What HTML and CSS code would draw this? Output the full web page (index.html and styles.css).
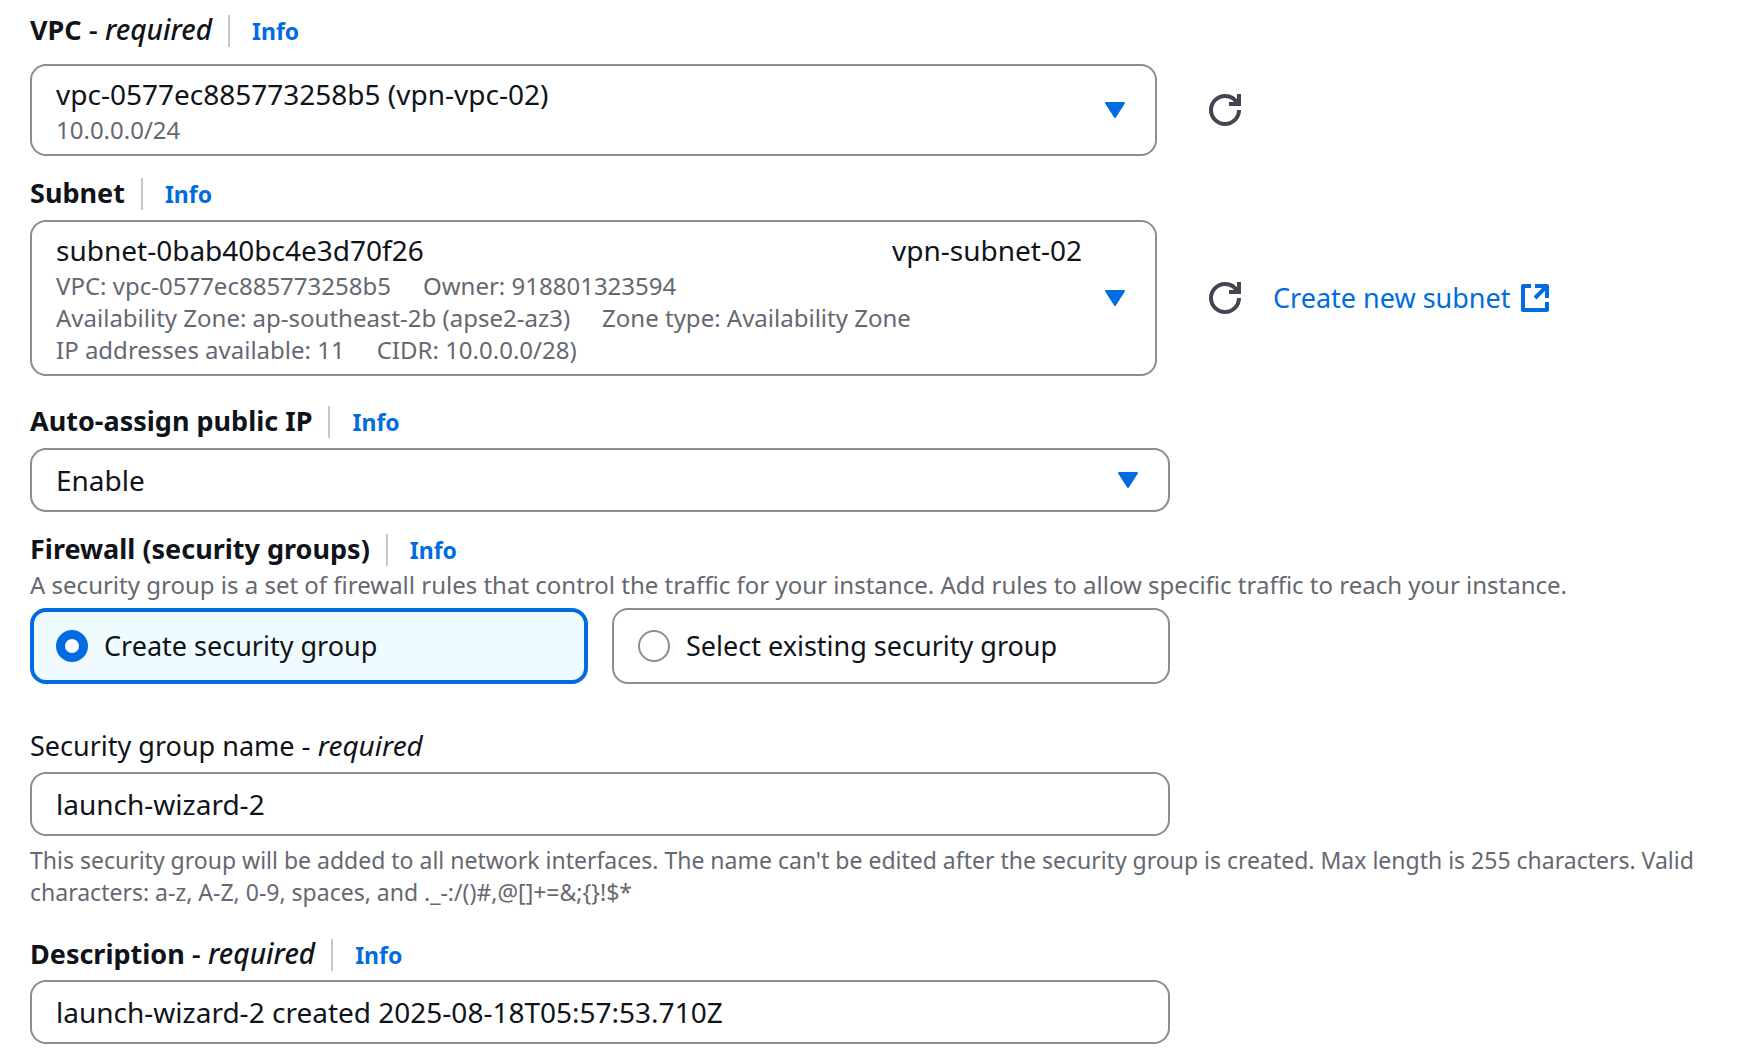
FILE: index.html
```html
<!DOCTYPE html>
<html lang="en">
<head>
<meta charset="utf-8">
<meta name="viewport" content="width=device-width, initial-scale=1">
<title>Network settings</title>
<link rel="stylesheet" href="styles.css">
</head>
<body>
<form class="settings">

  <section class="field field-spaced">
    <div class="label-row">
      <span class="label" id="vpc-label">VPC <span class="required">- <em>required</em></span></span>
      <a class="info" href="#vpc-info">Info</a>
    </div>
    <div class="control-row">
      <button type="button" class="picker" aria-haspopup="listbox" aria-labelledby="vpc-label vpc-value">
        <span class="picker-body" id="vpc-value">
          <span class="picker-title"><span>vpc-0577ec885773258b5 (vpn-vpc-02)</span></span>
          <span class="picker-meta"><span>10.0.0.0/24</span></span>
        </span>
        <svg class="caret" viewBox="0 0 20 16" aria-hidden="true"><path d="M1 1h18L10 15z"/></svg>
      </button>
      <button type="button" class="refresh" aria-label="Refresh VPCs">
        <svg viewBox="0 0 16 16" aria-hidden="true"><path d="M15 8c0 3.87-3.13 7-7 7s-7-3.13-7-7 3.13-7 7-7c2.79 0 5.2 1.63 6.33 4M10 5h5V0"/></svg>
      </button>
    </div>
  </section>

  <section class="field">
    <div class="label-row">
      <span class="label" id="subnet-label">Subnet</span>
      <a class="info" href="#subnet-info">Info</a>
    </div>
    <div class="control-row">
      <button type="button" class="picker" aria-haspopup="listbox" aria-labelledby="subnet-label subnet-value">
        <span class="picker-body" id="subnet-value">
          <span class="picker-title"><span>subnet-0bab40bc4e3d70f26</span><span>vpn-subnet-02</span></span>
          <span class="picker-meta"><span>VPC: vpc-0577ec885773258b5</span><span>Owner: 918801323594</span></span>
          <span class="picker-meta"><span>Availability Zone: ap-southeast-2b (apse2-az3)</span><span>Zone type: Availability Zone</span></span>
          <span class="picker-meta"><span>IP addresses available: 11</span><span>CIDR: 10.0.0.0/28)</span></span>
        </span>
        <svg class="caret" viewBox="0 0 20 16" aria-hidden="true"><path d="M1 1h18L10 15z"/></svg>
      </button>
      <button type="button" class="refresh" aria-label="Refresh subnets">
        <svg viewBox="0 0 16 16" aria-hidden="true"><path d="M15 8c0 3.87-3.13 7-7 7s-7-3.13-7-7 3.13-7 7-7c2.79 0 5.2 1.63 6.33 4M10 5h5V0"/></svg>
      </button>
      <a class="create-link" href="#create-subnet">Create new subnet
        <svg viewBox="0 0 16 16" aria-hidden="true"><path d="M14 10v4H2V2h4M8 2h6v6M14 2L8 8"/></svg>
      </a>
    </div>
  </section>

  <section class="field">
    <div class="label-row">
      <label class="label" for="public-ip">Auto-assign public IP</label>
      <a class="info" href="#public-ip-info">Info</a>
    </div>
    <div class="select-wrap">
      <select class="input" id="public-ip">
        <option selected>Enable</option>
        <option>Disable</option>
      </select>
      <svg class="caret" viewBox="0 0 20 16" aria-hidden="true"><path d="M1 1h18L10 15z"/></svg>
    </div>
  </section>

  <section class="field">
    <div class="label-row">
      <span class="label" id="firewall-label">Firewall (security groups)</span>
      <a class="info" href="#firewall-info">Info</a>
    </div>
    <p class="description">A security group is a set of firewall rules that control the traffic for your instance. Add rules to allow specific traffic to reach your instance.</p>
    <div class="tiles" role="radiogroup" aria-labelledby="firewall-label">
      <label class="tile tile-selected"><input type="radio" name="firewall" checked><span>Create security group</span></label>
      <label class="tile"><input type="radio" name="firewall"><span>Select existing security group</span></label>
    </div>
  </section>

  <section class="field">
    <div class="label-row">
      <label class="label label-plain" for="group-name">Security group name <span class="required">- <em>required</em></span></label>
    </div>
    <input class="input" id="group-name" type="text" value="launch-wizard-2" aria-describedby="group-hint">
    <p class="hint" id="group-hint">This security group will be added to all network interfaces. The name can't be edited after the security group is created. Max length is 255 characters. Valid characters: a-z, A-Z, 0-9, spaces, and ._-:/()#,@[]+=&amp;;{}!$*</p>
  </section>

  <section class="field">
    <div class="label-row">
      <label class="label" for="group-description">Description <span class="required">- <em>required</em></span></label>
      <a class="info" href="#description-info">Info</a>
    </div>
    <input class="input" id="group-description" type="text" value="launch-wizard-2 created 2025-08-18T05:57:53.710Z">
  </section>

</form>
</body>
</html>
```
FILE: styles.css
```css
:root {
  --text: #0f141a;
  --muted: #656871;
  --border: #8c8c94;
  --divider: #c6c6cd;
  --accent: #006ce0;
  --accent-soft: #f0fbff;
  --icon: #424650;
}

*, *::before, *::after { box-sizing: border-box; }

body {
  margin: 0;
  background: #fff;
  color: var(--text);
  font-family: "Noto Sans", "Open Sans", sans-serif;
  font-size: 27px;
  line-height: 32px;
}

button, input, select { font: inherit; color: inherit; }
p { margin: 0; }
a { color: var(--accent); text-decoration: none; }

.settings {
  padding: 13px 20px 20px 30px;
}

.field { margin-bottom: 21px; }
.field:nth-of-type(2), .field:nth-of-type(5) { margin-bottom: 29px; }
.field:nth-of-type(4) { margin-bottom: 45px; }
.field:last-child { margin-bottom: 0; }

.label-row {
  display: flex;
  align-items: baseline;
  height: 32px;
  margin-bottom: 11px;
}
.field-spaced .label-row { margin-bottom: 19px; }

.label { font-weight: 700; }
.required { font-size: 28px; font-weight: 500; }
.label-plain, .label-plain .required { font-weight: 400; }

.info {
  margin-left: 16px;
  padding-left: 22px;
  border-left: 2px solid var(--divider);
  font-size: 23px;
  font-weight: 700;
}

.control-row { display: flex; align-items: center; }

.picker {
  display: flex;
  align-items: center;
  flex: none;
  width: calc(100% * 2 / 3 - 13px);
  padding: 8px 30px 8px 24px;
  border: 2px solid var(--border);
  border-radius: 16px;
  background: #fff;
  text-align: left;
}
.picker-body { flex: 1; margin-right: 23px; }
.picker-title {
  display: flex;
  justify-content: space-between;
  font-size: 28px;
  line-height: 40px;
}
.picker-meta {
  display: flex;
  gap: 32px;
  color: var(--muted);
  font-size: 24px;
}

.caret {
  flex: none;
  width: 20px;
  height: 16px;
  fill: var(--accent);
  stroke: var(--accent);
  stroke-width: 2;
  stroke-linejoin: round;
}

.refresh {
  flex: none;
  margin-left: 52px;
  padding: 0;
  border: 0;
  background: none;
}
.refresh svg, .create-link svg {
  display: block;
  width: 32px;
  height: 32px;
  fill: none;
  stroke: var(--icon);
  stroke-width: 2;
}

.create-link {
  display: flex;
  align-items: center;
  gap: 8px;
  margin-left: 32px;
}
.create-link svg { stroke: var(--accent); stroke-linejoin: round; }

.input {
  display: block;
  width: calc(100% * 2 / 3);
  height: 64px;
  padding: 0 24px;
  border: 2px solid var(--border);
  border-radius: 16px;
  background: #fff;
  font-size: 28px;
  appearance: none;
}

.select-wrap {
  display: grid;
  width: calc(100% * 2 / 3);
  align-items: center;
}
.select-wrap > * { grid-area: 1 / 1; }
.select-wrap .input { width: 100%; }
.select-wrap .caret {
  justify-self: end;
  margin-right: 32px;
  pointer-events: none;
}

.description, .hint { color: var(--muted); font-size: 23px; }
.description { margin: -7px 0 7px; font-size: 24px; }
.hint { margin-top: 8px; }

.tiles {
  display: grid;
  grid-template-columns: 1fr 1fr;
  gap: 24px;
  width: calc(100% * 2 / 3);
}
.tile {
  display: flex;
  align-items: center;
  gap: 16px;
  height: 76px;
  padding: 0 24px;
  border: 2px solid var(--border);
  border-radius: 16px;
}
.tile-selected {
  padding: 0 22px;
  border: 4px solid var(--accent);
  background: var(--accent-soft);
}
.tile input {
  flex: none;
  width: 32px;
  height: 32px;
  margin: 0;
  border: 2px solid var(--border);
  border-radius: 50%;
  background: #fff;
  appearance: none;
}
.tile input:checked { border: 9px solid var(--accent); }
```
